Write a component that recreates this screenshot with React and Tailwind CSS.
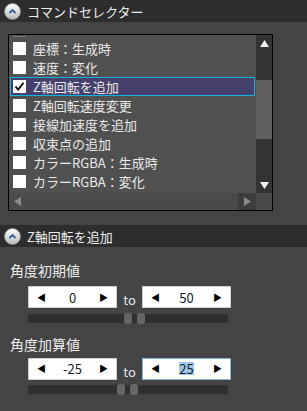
import React from 'react';

const font = { fontFamily: '"Noto Sans CJK JP", "Noto Sans", sans-serif' };

const items = [
    '座標：生成時',
    '速度：変化',
    'Z軸回転を追加',
    'Z軸回転速度変更',
    '接線加速度を追加',
    '収束点の追加',
    'カラーRGBA：生成時',
    'カラーRGBA：変化',
];

function CollapseIcon() {
    return (
        <svg width="17" height="17" viewBox="0 0 17 17">
            <defs>
                <linearGradient id="cg" x1="0" y1="0" x2="0" y2="1">
                    <stop offset="0" stopColor="#ffffff" />
                    <stop offset="1" stopColor="#b9b9b9" />
                </linearGradient>
            </defs>
            <circle cx="8.5" cy="8.5" r="8" fill="url(#cg)" stroke="#8a8a8a" strokeWidth="0.8" />
            <path d="M5.5 10 L8.5 7 L11.5 10" fill="none" stroke="#2f5f9a" strokeWidth="1.8" />
        </svg>
    );
}

function SectionHeader({ title }) {
    return (
        <div className="h-[22px] bg-[#2d2d2d] flex items-center pl-[4px] gap-[6px]">
            <CollapseIcon />
            <span className="text-[13px] text-[#eeeeee] leading-none">{title}</span>
        </div>
    );
}

function Spinbox({ value, focused }) {
    return (
        <div className={`w-[89px] h-[22px] bg-white border flex items-center justify-between px-[8px] ${focused ? 'border-[#86b4e0]' : 'border-[#cfcfcf]'}`}>
            <span className="text-[9px] text-black leading-none">◀</span>
            {focused ? (
                <span className="text-[13px] leading-none text-[#1a1a1a] bg-[#9cc8f0]">{value}</span>
            ) : (
                <span className="text-[13px] leading-none text-[#1a1a1a]">{value}</span>
            )}
            <span className="text-[9px] text-black leading-none">▶</span>
        </div>
    );
}

function RangeRow({ label, from, to, thumbA, focused, boxGap }) {
    return (
        <div className="flex flex-col">
            <div className="pl-[10px] text-[14px] text-[#eeeeee] leading-[18px]">{label}</div>
            <div className={`pl-[28px] flex items-center ${boxGap}`}>
                <Spinbox value={from} />
                <span className="w-[25px] text-center text-[13px] text-[#e6e6e6] pt-[5px]">to</span>
                <Spinbox value={to} focused={focused} />
            </div>
            <div className="ml-[28px] mt-[4px] w-[200px] h-[9px] bg-[#2f2f2f] relative">
                <div className="absolute top-[-1px] w-[8px] h-[11px] rounded-[3px] bg-[#666666]" style={{ left: thumbA }} />
                <div className="absolute top-[-1px] w-[8px] h-[11px] rounded-[3px] bg-[#666666]" style={{ left: thumbA + 13 }} />
            </div>
        </div>
    );
}

export default function App() {
    return (
        <div className="w-[307px] h-[411px] bg-[#444444] overflow-hidden" style={font}>
            <SectionHeader title="コマンドセレクター" />

            <div className="ml-[8px] mt-[12px] w-[265px] h-[177px] border border-black bg-[#505050] flex flex-col">
                <div className="flex flex-1 min-h-0">
                    <div className="flex-1 flex flex-col pt-[1px] pl-[1px]">
                        <div className="h-[3px] flex items-start pl-[3px]">
                            <div className="w-[13px] h-[1px] bg-[#7a7a7a]" />
                        </div>
                        {items.map((item, i) => (
                            <div
                                key={i}
                                className={`h-[19px] flex items-center gap-[7px] pl-[2px] mr-[1px] border ${i === 2 ? 'bg-[#45416c] border-[#16b0e0]' : 'border-transparent'}`}
                            >
                                <div className="w-[13px] h-[13px] bg-white flex items-center justify-center">
                                    {i === 2 && (
                                        <svg width="11" height="11" viewBox="0 0 11 11">
                                            <path d="M1.5 5.5 L4.2 8.5 L9.5 1.8" fill="none" stroke="#000" strokeWidth="1.8" />
                                        </svg>
                                    )}
                                </div>
                                <span className="text-[13px] text-[#eaeaea] leading-none whitespace-nowrap">{item}</span>
                            </div>
                        ))}
                    </div>
                    <div className="w-[16px] flex flex-col bg-[#333333]">
                        <div className="h-[16px] flex items-center justify-center">
                            <svg width="9" height="7" viewBox="0 0 9 7"><path d="M4.5 0 L9 7 L0 7 Z" fill="#f2f2f2" /></svg>
                        </div>
                        <div className="h-[29px]" />
                        <div className="h-[59px] bg-[#606060]" />
                        <div className="flex-1" />
                        <div className="h-[16px] flex items-center justify-center">
                            <svg width="9" height="7" viewBox="0 0 9 7"><path d="M0 0 L9 0 L4.5 7 Z" fill="#f2f2f2" /></svg>
                        </div>
                    </div>
                </div>
                <div className="h-[17px] flex bg-[#4a4a4a]">
                    <div className="w-[17px] flex items-center justify-center">
                        <svg width="7" height="9" viewBox="0 0 7 9"><path d="M7 0 L7 9 L0 4.5 Z" fill="#8a8a8a" /></svg>
                    </div>
                    <div className="flex-1" />
                    <div className="w-[18px] bg-[#3d3d3d] flex items-center justify-center">
                        <svg width="7" height="9" viewBox="0 0 7 9"><path d="M0 0 L7 4.5 L0 9 Z" fill="#8a8a8a" /></svg>
                    </div>
                    <div className="w-[16px] bg-[#4a4a4a]" />
                </div>
            </div>

            <div className="mt-[14px]">
                <SectionHeader title="Z軸回転を追加" />
            </div>

            <div className="pt-[14px] flex flex-col">
                <RangeRow label="角度初期値" from="0" to="50" thumbA={96} boxGap="mt-[6px]" />
                <div className="h-[12px]" />
                <RangeRow label="角度加算値" from="-25" to="25" thumbA={89} focused boxGap="mt-[4px]" />
            </div>
        </div>
    );
}
